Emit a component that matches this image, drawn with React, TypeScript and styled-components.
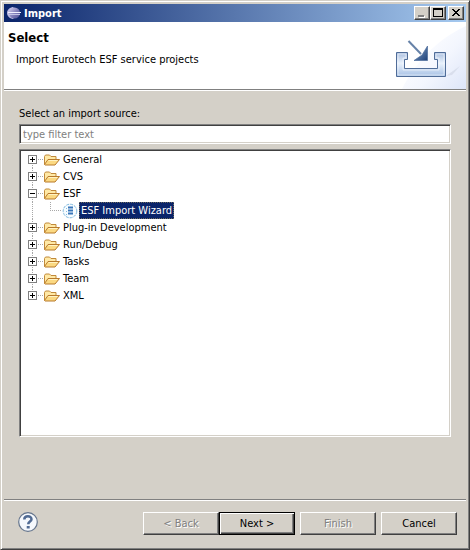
import React, { useState } from "react";
import styled, { createGlobalStyle, css } from "styled-components";

const face = "#d4d0c8";
const shadow = "#808080";
const dark = "#404040";
const navy = "#0a246a";

const GlobalStyle = createGlobalStyle`
  * { box-sizing: border-box; }
  body {
    margin: 0;
    background: ${face};
    color: #000;
    font-family: "DejaVu Sans Condensed", "DejaVu Sans", sans-serif;
    font-size: 11px;
    line-height: 17px;
  }
  button, input { font: inherit; color: inherit; }
`;

const raised = css`
  background: ${face};
  border: 1px solid;
  border-color: #fff ${dark} ${dark} #fff;
  box-shadow: inset -1px -1px 0 ${shadow};
`;

const Frame = styled.div`
  display: flex;
  flex-direction: column;
  min-height: 100vh;
  padding: 1px;
  background: ${face};
  border: 1px solid;
  border-color: ${face} ${dark} ${dark} ${face};
  box-shadow: inset 1px 1px 0 #fff, inset -1px -1px 0 ${shadow};
`;

const Window = styled.main`
  display: flex;
  flex-direction: column;
  flex: 1;
  padding: 2px;
`;

const TitleBar = styled.header`
  display: flex;
  align-items: center;
  height: 18px;
  padding: 0 2px 0 3px;
  background: linear-gradient(90deg, ${navy}, #a6caf0);
`;

const Title = styled.span`
  flex: 1;
  padding-left: 2px;
  color: #fff;
  font-weight: bold;
`;

const Controls = styled.div`
  display: flex;
`;

const CaptionButton = styled.button<{ $apart?: boolean }>`
  ${raised}
  display: flex;
  width: 16px;
  height: 14px;
  padding: 0;
  margin-left: ${(p) => (p.$apart ? 2 : 0)}px;
`;

const Banner = styled.section`
  display: flex;
  justify-content: space-between;
  height: 68px;
  background: #fff;
  border-bottom: 1px solid ${shadow};
`;

const BannerText = styled.div`
  padding: 7px 0 0 4px;
`;

const Heading = styled.h1`
  margin: 0;
  font-size: 13px;
  line-height: 18px;
`;

const Description = styled.p`
  margin: 4px 0 0 8px;
`;

const Body = styled.section`
  display: flex;
  flex-direction: column;
  flex: 1;
  padding: 14px 15px 62px;
  border-top: 1px solid #fff;
`;

const sunken = css`
  border: 1px solid;
  border-color: ${shadow} #fff #fff ${shadow};
  box-shadow: inset 1px 1px 0 ${dark}, inset -1px -1px 0 ${face};
  background: #fff;
`;

const Filter = styled.input`
  ${sunken}
  width: 100%;
  height: 20px;
  margin: 2px 0 5px;
  padding: 0 3px;
  border-radius: 0;
  outline: none;
  &::placeholder { color: ${shadow}; opacity: 1; }
`;

const Tree = styled.ul`
  ${sunken}
  flex: 1;
  margin: 0;
  padding: 1px 8px;
  list-style: none;
`;

const Group = styled.ul`
  margin: 0;
  padding: 0;
  list-style: none;
`;

const Row = styled.div`
  display: flex;
  align-items: center;
  height: 17px;
`;

const dotsDown = "repeating-linear-gradient(180deg, #a8a8a8 0 1px, transparent 1px 2px)";
const dotsAcross = "repeating-linear-gradient(90deg, #a8a8a8 0 1px, transparent 1px 2px)";

const Branch = styled.span<{ $edge?: "first" | "last"; $through?: boolean }>`
  display: flex;
  align-items: center;
  width: ${(p) => (p.$through ? 18 : 16)}px;
  height: 17px;
  background-image: ${dotsDown}${(p) => (p.$through ? "" : `, ${dotsAcross}`)};
  background-repeat: no-repeat;
  background-size: 1px ${(p) => (p.$edge ? 9 : 17)}px, 12px 1px;
  background-position: 4px ${(p) => (p.$edge === "first" ? 8 : 0)}px, 4px 8px;
`;

const Expander = styled.button`
  display: flex;
  width: 9px;
  height: 9px;
  padding: 0;
  border: 1px solid ${shadow};
  background: #fff;
`;

const ItemText = styled.span<{ $selected?: boolean }>`
  padding: 0 2px;
  margin-left: 1px;
  white-space: nowrap;
  ${(p) => p.$selected && css`
    color: #fff;
    background: ${navy};
    outline: 1px dotted #6d6a5c;
    outline-offset: -1px;
  `}
`;

const Footer = styled.footer`
  display: flex;
  align-items: flex-start;
  height: 47px;
  padding: 12px 9px 0 14px;
  border-top: 1px solid ${shadow};
  box-shadow: inset 0 1px 0 #fff;
`;

const HelpButton = styled.button`
  display: flex;
  padding: 0;
  margin-right: auto;
  border: 0;
  background: none;
`;

const Pair = styled.div`
  display: flex;
`;

const Actions = styled.div`
  display: flex;
  gap: 5px;
`;

const PushButton = styled.button<{ $primary?: boolean }>`
  ${raised}
  width: 76px;
  height: 23px;
  padding: 0;
  &:disabled { color: ${shadow}; text-shadow: 1px 1px 0 #fff; }
  ${(p) => p.$primary && css`
    border-color: #000;
    box-shadow: inset 1px 1px 0 #fff, inset -1px -1px 0 ${dark}, inset -2px -2px 0 ${shadow};
  `}
`;

const EclipseIcon = () => (
  <svg width="15" height="16" viewBox="0 0 15 16" aria-hidden="true">
    <defs>
      <linearGradient id="globe" x1="0" y1="0" x2="1" y2="1">
        <stop offset="0" stopColor="#d5d0ee" />
        <stop offset="0.5" stopColor="#8583bd" />
        <stop offset="1" stopColor="#4c4c94" />
      </linearGradient>
    </defs>
    <path d="M7 2C3 2 0 4.700 0 8s3 6 7 6c-2-1.500-3-3.500-3-6s1-4.500 3-6z" fill="#bcb9e2" />
    <circle cx="7.500" cy="8" r="5.500" fill="url(#globe)" />
    <path d="M1 7.500h13" stroke="#f0f0ff" />
    <path d="M1 9.500h12" stroke="#c3c4e6" />
  </svg>
);

const ImportArt = () => (
  <svg width="94" height="67" viewBox="0 0 94 67" aria-hidden="true">
    <defs>
      <linearGradient id="sky" gradientUnits="userSpaceOnUse" x1="40" y1="20" x2="94" y2="67">
        <stop offset="0" stopColor="#fff" />
        <stop offset="0.500" stopColor="#f3f6fe" />
        <stop offset="1" stopColor="#dde5f8" />
      </linearGradient>
      <linearGradient id="tray" x1="0" y1="0" x2="0" y2="1">
        <stop offset="0" stopColor="#a9bedf" />
        <stop offset="0.450" stopColor="#e8f1fc" />
        <stop offset="1" stopColor="#a6c0e4" />
      </linearGradient>
      <linearGradient id="head" x1="0" y1="0" x2="1" y2="1">
        <stop offset="0" stopColor="#89a9cf" />
        <stop offset="1" stopColor="#1d4078" />
      </linearGradient>
    </defs>
    <path d="M94 4v63H30C42 42 65 17 94 4z" fill="url(#sky)" />
    <path d="M74 54L88 44 80 53z" fill="#c7cddd" opacity="0.500" />
    <path d="M24.500 30.500h11v7h-3v9h33v-9h-3v-7h11v24h-49z" fill="url(#tray)" stroke="#4f6c98" />
    <path d="M26 32h8v4h-3v12h36v-12h-3v-4h8v21h-46z" fill="none" stroke="#fff" opacity="0.500" />
    <path d="M36.500 19L49 32" stroke="#6682a8" strokeWidth="2" />
    <path d="M55.500 24V38.500H42L50 33z" fill="url(#head)" stroke="#4c6c9b" strokeWidth="0.700" />
  </svg>
);

const FolderIcon = () => (
  <svg width="16" height="16" viewBox="0 0 16 16" aria-hidden="true">
    <path d="M0.500 12.500v-8l1-1.500h4l1.500 1.500h5v3" fill="#ffe9a6" stroke="#c18a3a" />
    <path d="M0.500 12.500L4 7.500h11.500l-4.500 5.500H1z" fill="#fbd982" stroke="#b87a2c" />
    <path d="M4.500 8.500h9" stroke="#fff3c4" />
  </svg>
);

const WizardIcon = () => (
  <svg width="16" height="16" viewBox="0 0 16 16" aria-hidden="true">
    <circle cx="8" cy="8" r="6.800" fill="#f7fcff" stroke="#80b9dd" strokeDasharray="3 1" />
    <path d="M6 4.500h5M6 7.500h5M6 10.500h5" stroke="#3976ba" strokeWidth="2" />
    <path d="M4 5.500h1M4 8.500h1M4 11.500h1" stroke="#86bde0" />
  </svg>
);

const HelpIcon = () => (
  <svg width="20" height="20" viewBox="0 0 20 20" aria-hidden="true">
    <circle cx="10" cy="10" r="9.300" fill="#f5f8fc" stroke="#65758d" strokeWidth="1.200" />
    <path d="M6.300 7.500C6.300 3.200 13.500 3.300 13.500 7.200c0 2.300-3.300 2.300-3.300 5" fill="none" stroke="#516b93" strokeWidth="2.500" />
    <path d="M8.700 14h3v2.500h-3z" fill="#516b93" />
  </svg>
);

const captionShapes = {
  Minimize: (
    <>
      <path d="M4 9h6v2H4z" fill="#fff" />
      <path d="M3 8h6v2H3z" fill={shadow} />
    </>
  ),
  Maximize: <path d="M2 1h10v9H2zM3 3v6h8V3z" fillRule="evenodd" />,
  Close: <path d="M3 2h2v1h1v1h2V3h1V2h2v1h-1v1H9v1H8v1h1v1h1v1h1v1H9V8H8V7H6v1H5v1H3V8h1V7h1V6h1V5H5V4H4V3H3z" />,
};

type Caption = keyof typeof captionShapes;

const CaptionIcon = ({ kind }: { kind: Caption }) => (
  <svg width="14" height="12" viewBox="0 0 14 12" shapeRendering="crispEdges" aria-hidden="true">
    {captionShapes[kind]}
  </svg>
);

const categories: { name: string; children?: string[] }[] = [
  { name: "General" },
  { name: "CVS" },
  { name: "ESF", children: ["ESF Import Wizard"] },
  { name: "Plug-in Development" },
  { name: "Run/Debug" },
  { name: "Tasks" },
  { name: "Team" },
  { name: "XML" },
];

export default function App() {
  const [open, setOpen] = useState<string[]>(["ESF"]);
  const toggle = (name: string) =>
    setOpen((list) => (list.includes(name) ? list.filter((n) => n !== name) : [...list, name]));

  return (
    <>
      <GlobalStyle />
      <Frame>
        <Window>
          <TitleBar>
            <EclipseIcon />
            <Title>Import</Title>
            <Controls>
              {(["Minimize", "Maximize", "Close"] as Caption[]).map((kind) => (
                <CaptionButton
                  key={kind}
                  aria-label={kind}
                  disabled={kind === "Minimize"}
                  $apart={kind === "Close"}
                >
                  <CaptionIcon kind={kind} />
                </CaptionButton>
              ))}
            </Controls>
          </TitleBar>
          <Banner>
            <BannerText>
              <Heading>Select</Heading>
              <Description>Import Eurotech ESF service projects</Description>
            </BannerText>
            <ImportArt />
          </Banner>
          <Body>
            <label htmlFor="filter">Select an import source:</label>
            <Filter id="filter" type="text" placeholder="type filter text" />
            <Tree role="tree" aria-label="Import sources">
              {categories.map(({ name, children }, i) => {
                const expanded = open.includes(name);
                const edge = i === 0 ? "first" : i === categories.length - 1 ? "last" : undefined;
                return (
                  <li key={name} role="treeitem" aria-expanded={expanded}>
                    <Row>
                      <Branch $edge={edge}>
                        <Expander aria-label={`Toggle ${name}`} onClick={() => toggle(name)}>
                          <svg width="7" height="7" viewBox="0 0 7 7" shapeRendering="crispEdges" aria-hidden="true">
                            <path d={expanded ? "M1 3h5v1H1z" : "M1 3h2V1h1v2h2v1H4v2H3V4H1z"} />
                          </svg>
                        </Expander>
                      </Branch>
                      <FolderIcon />
                      <ItemText>{name}</ItemText>
                    </Row>
                    {expanded && children && (
                      <Group role="group">
                        {children.map((child) => (
                          <Row as="li" key={child} role="treeitem" aria-selected="true">
                            <Branch $through />
                            <Branch $edge="last" />
                            <WizardIcon />
                            <ItemText $selected>{child}</ItemText>
                          </Row>
                        ))}
                      </Group>
                    )}
                  </li>
                );
              })}
            </Tree>
          </Body>
          <Footer>
            <HelpButton aria-label="Help">
              <HelpIcon />
            </HelpButton>
            <Actions>
              <Pair>
                <PushButton disabled>&lt; Back</PushButton>
                <PushButton $primary>Next &gt;</PushButton>
              </Pair>
              <PushButton disabled>Finish</PushButton>
              <PushButton>Cancel</PushButton>
            </Actions>
          </Footer>
        </Window>
      </Frame>
    </>
  );
}
